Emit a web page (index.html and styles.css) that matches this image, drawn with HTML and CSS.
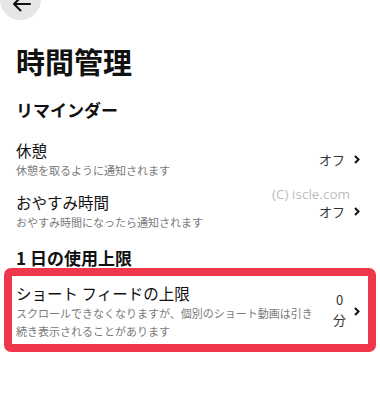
FILE: index.html
```html
<!DOCTYPE html>
<html lang="ja">
<head>
<meta charset="utf-8">
<link rel="stylesheet" href="styles.css">
</head>
<body>
<div class="topbar">
  <div class="back">
    <svg width="20" height="16" viewBox="0 0 20 16"><path d="M18 8H2M8.5 1.5L2 8l6.5 6.5" fill="none" stroke="#111" stroke-width="2" stroke-linecap="round" stroke-linejoin="round"/></svg>
  </div>
</div>
<main class="content">
  <h1 class="title">時間管理</h1>
  <h2 class="section">リマインダー</h2>
  <div class="row">
    <div class="main">
      <div class="label">休憩</div>
      <div class="desc">休憩を取るように通知されます</div>
    </div>
    <div class="value">オフ</div>
    <svg class="chev" width="6" height="9" viewBox="0 0 6 9"><path d="M1 1l3.5 3.5L1 8" fill="none" stroke="#111" stroke-width="2"/></svg>
  </div>
  <div class="row row2">
    <div class="main">
      <div class="label">おやすみ時間</div>
      <div class="desc">おやすみ時間になったら通知されます</div>
    </div>
    <div class="value">オフ</div>
    <svg class="chev" width="6" height="9" viewBox="0 0 6 9"><path d="M1 1l3.5 3.5L1 8" fill="none" stroke="#111" stroke-width="2"/></svg>
    <span class="watermark">(C) iscle.com</span>
  </div>
  <h2 class="section section2">1 日の使用上限</h2>
  <div class="box">
    <div class="main">
      <div class="label">ショート フィードの上限</div>
      <div class="desc">スクロールできなくなりますが、個別のショート動画は引き続き表示されることがあります</div>
    </div>
    <div class="value stack">0<br>分</div>
    <svg class="chev" width="6" height="9" viewBox="0 0 6 9"><path d="M1 1l3.5 3.5L1 8" fill="none" stroke="#111" stroke-width="2"/></svg>
  </div>
</main>
</body>
</html>
```

FILE: styles.css
```css
html, body {
  margin: 0;
  padding: 0;
  background: #fff;
}
body {
  width: 380px;
  height: 420px;
  overflow: hidden;
  font-family: "Noto Sans CJK JP", "Noto Sans", sans-serif;
  color: #111;
}
.topbar {
  height: 20px;
  overflow: hidden;
}
.back {
  width: 41px;
  height: 41px;
  margin-top: -21px;
  border-radius: 50%;
  background: #e6e6e6;
  display: flex;
  align-items: flex-end;
  justify-content: center;
  box-sizing: border-box;
}
.back svg {
  margin-bottom: 8px;
  margin-left: 3px;
}
.content {
  padding: 0 16px;
}
.title {
  margin: 21px 0 0;
  font-size: 29px;
  line-height: 40px;
  font-weight: 700;
}
.section {
  margin: 17px 0 0;
  font-size: 17px;
  line-height: 24px;
  font-weight: 700;
}
.section2 {
  margin-top: 16px;
  line-height: 22px;
}
.row {
  position: relative;
  display: flex;
  align-items: center;
  margin-top: 18px;
  padding-right: 4px;
}
.row2 {
  margin-top: 13px;
}
.main {
  flex: 1;
  min-width: 0;
}
.label {
  font-size: 15.5px;
  line-height: 21px;
  color: #111;
}
.desc {
  font-size: 11px;
  line-height: 18px;
  color: #7a7a7a;
}
.value {
  font-size: 13px;
  line-height: 16px;
  color: #333;
  margin-right: 9px;
}
.row .value {
  margin-top: 0;
}
.chev {
  flex: none;
}
.watermark {
  position: absolute;
  right: 14px;
  top: -4px;
  font-family: "Open Sans", "Liberation Sans", sans-serif;
  font-size: 13.5px;
  line-height: 12px;
  color: #bdbdbd;
}
.box {
  display: flex;
  align-items: center;
  margin: -1px -12px 0;
  border: 8px solid #f0364a;
  border-radius: 7px;
  padding: 6px 8px 4px 4px;
}
.box .label {
  line-height: 22px;
}
.box .main {
  margin-right: 12px;
}
.stack {
  text-align: center;
  width: 13px;
  line-height: 20px;
  margin-right: 8px;
  margin-top: -3px;
}
```
